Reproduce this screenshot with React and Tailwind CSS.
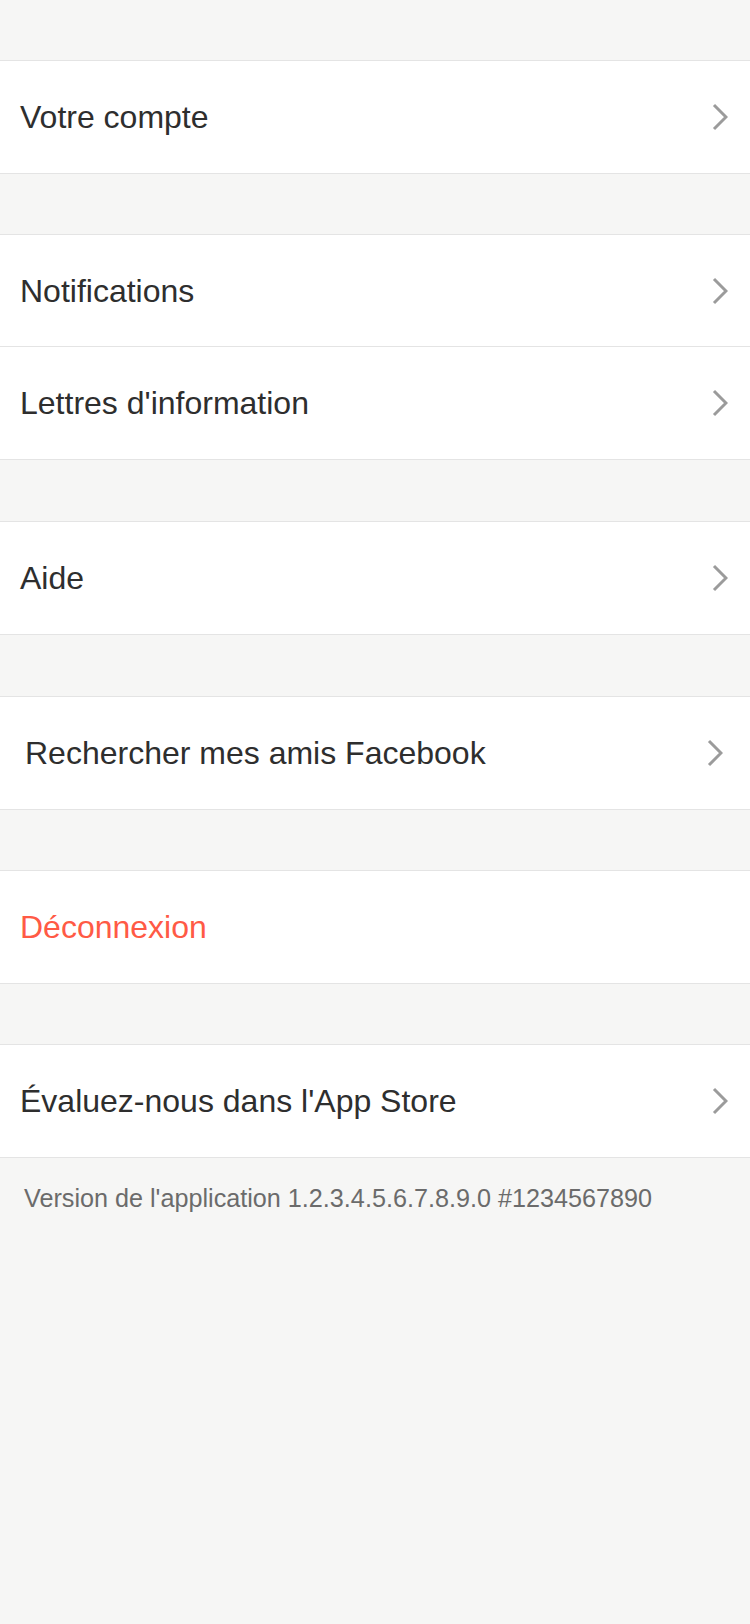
import React from 'react';

const Chevron = () => (
  <svg width="16" height="28" viewBox="0 0 16 28" fill="none" className="shrink-0">
    <polyline points="2,2 14,14 2,26" stroke="#9b9b9b" strokeWidth="3" strokeLinejoin="miter" />
  </svg>
);

const Row = ({ label, red, chevron = true, shifted }) => (
  <div className={`flex h-[112px] items-center justify-between bg-white ${shifted ? 'pl-[25px] pr-[27px]' : 'pl-[20px] pr-[22px]'}`}>
    <span className={`text-[32px] ${red ? 'text-[#ff5a45]' : 'text-[#2e2e2e]'}`}>{label}</span>
    {chevron && <Chevron />}
  </div>
);

const Section = ({ gap, children }) => (
  <div className={`${gap} border-y border-[#e4e4e4] divide-y divide-[#e4e4e4]`}>{children}</div>
);

export default function App() {
  return (
    <div className="min-h-[1624px] w-[750px] bg-[#f6f6f5] pt-[60px] font-['Liberation_Sans',Arial,sans-serif]">
      <Section gap="">
        <Row label="Votre compte" />
      </Section>
      <Section gap="mt-[60px]">
        <Row label="Notifications" />
        <Row label="Lettres d'information" />
      </Section>
      <Section gap="mt-[61px]">
        <Row label="Aide" />
      </Section>
      <Section gap="mt-[61px]">
        <Row label="Rechercher mes amis Facebook" shifted />
      </Section>
      <Section gap="mt-[60px]">
        <Row label="Déconnexion" red chevron={false} />
      </Section>
      <Section gap="mt-[60px]">
        <Row label="Évaluez-nous dans l'App Store" />
      </Section>
      <p className="pl-[24px] pt-[25px] text-[25.2px] leading-[30px] text-[#6b6b6b]">
        Version de l'application 1.2.3.4.5.6.7.8.9.0 #1234567890
      </p>
    </div>
  );
}
